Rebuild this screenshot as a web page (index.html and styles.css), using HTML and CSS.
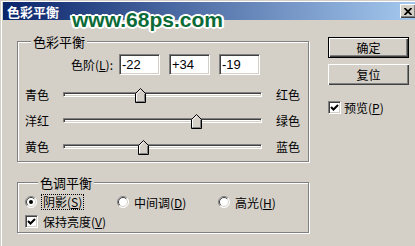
FILE: index.html
```html
<!DOCTYPE html>
<html lang="zh-CN">
<head>
    <meta charset="UTF-8">
    <title>色彩平衡</title>
    <link rel="stylesheet" href="styles.css">
</head>
<body>
    <div class="window">
        <div class="titlebar">
            <span class="title">色彩平衡</span>
            <span class="close-btn">
                <svg width="8" height="7" viewBox="0 0 8 7"><path d="M0.5 0 L7.5 7 M7.5 0 L0.5 7" stroke="#000" stroke-width="1.8"/></svg>
            </span>
        </div>
        <div class="content">
            <div class="main-col">
                <fieldset class="group group-color">
                    <legend>色彩平衡</legend>
                    <div class="level-row">
                        <label class="level-label">色阶(<u>L</u>):</label>
                        <input class="level-input" type="text" value="-22">
                        <input class="level-input" type="text" value="+34">
                        <input class="level-input" type="text" value="-19">
                    </div>
                    <div class="sliders">
                        <div class="slider-row">
                            <span class="slider-left">青色</span>
                            <div class="track">
                                <span class="thumb" style="left: 72px"><svg width="11" height="15" viewBox="0 0 11 15"><polygon points="0.5,14.5 0.5,5.5 5.5,0.5 10.5,5.5 10.5,14.5" fill="#d4d0c8" stroke="#000"/><path d="M1.5 13.5 V5.9 L5.5 1.9" stroke="#fff" fill="none"/><path d="M1.5 13.5 H9.5 V5.9" stroke="#808080" fill="none"/></svg></span>
                            </div>
                            <span class="slider-right">红色</span>
                        </div>
                        <div class="slider-row">
                            <span class="slider-left">洋红</span>
                            <div class="track">
                                <span class="thumb" style="left: 128px"><svg width="11" height="15" viewBox="0 0 11 15"><polygon points="0.5,14.5 0.5,5.5 5.5,0.5 10.5,5.5 10.5,14.5" fill="#d4d0c8" stroke="#000"/><path d="M1.5 13.5 V5.9 L5.5 1.9" stroke="#fff" fill="none"/><path d="M1.5 13.5 H9.5 V5.9" stroke="#808080" fill="none"/></svg></span>
                            </div>
                            <span class="slider-right">绿色</span>
                        </div>
                        <div class="slider-row">
                            <span class="slider-left">黄色</span>
                            <div class="track">
                                <span class="thumb" style="left: 75px"><svg width="11" height="15" viewBox="0 0 11 15"><polygon points="0.5,14.5 0.5,5.5 5.5,0.5 10.5,5.5 10.5,14.5" fill="#d4d0c8" stroke="#000"/><path d="M1.5 13.5 V5.9 L5.5 1.9" stroke="#fff" fill="none"/><path d="M1.5 13.5 H9.5 V5.9" stroke="#808080" fill="none"/></svg></span>
                            </div>
                            <span class="slider-right">蓝色</span>
                        </div>
                    </div>
                </fieldset>

                <fieldset class="group group-tone">
                    <legend>色调平衡</legend>
                    <div class="radio-row">
                        <label class="radio-item item-shadow">
                            <svg class="radio" width="12" height="12" viewBox="0 0 12 12"><circle cx="6" cy="6" r="5.5" fill="#fff"/><path d="M2.1 9.9 A5.5 5.5 0 0 1 9.9 2.1" stroke="#808080" fill="none"/><path d="M9.9 2.1 A5.5 5.5 0 0 1 2.1 9.9" stroke="#fff" fill="none"/><path d="M2.8 9.2 A4.5 4.5 0 0 1 9.2 2.8" stroke="#404040" fill="none"/><path d="M9.2 2.8 A4.5 4.5 0 0 1 2.8 9.2" stroke="#d4d0c8" fill="none"/><circle cx="6" cy="6" r="2" fill="#000"/></svg>
                            <span class="focus">阴影(<u>S</u>)</span>
                        </label>
                        <label class="radio-item item-mid">
                            <svg class="radio" width="12" height="12" viewBox="0 0 12 12"><circle cx="6" cy="6" r="5.5" fill="#fff"/><path d="M2.1 9.9 A5.5 5.5 0 0 1 9.9 2.1" stroke="#808080" fill="none"/><path d="M9.9 2.1 A5.5 5.5 0 0 1 2.1 9.9" stroke="#fff" fill="none"/><path d="M2.8 9.2 A4.5 4.5 0 0 1 9.2 2.8" stroke="#404040" fill="none"/><path d="M9.2 2.8 A4.5 4.5 0 0 1 2.8 9.2" stroke="#d4d0c8" fill="none"/></svg>
                            <span>中间调(<u>D</u>)</span>
                        </label>
                        <label class="radio-item">
                            <svg class="radio" width="12" height="12" viewBox="0 0 12 12"><circle cx="6" cy="6" r="5.5" fill="#fff"/><path d="M2.1 9.9 A5.5 5.5 0 0 1 9.9 2.1" stroke="#808080" fill="none"/><path d="M9.9 2.1 A5.5 5.5 0 0 1 2.1 9.9" stroke="#fff" fill="none"/><path d="M2.8 9.2 A4.5 4.5 0 0 1 9.2 2.8" stroke="#404040" fill="none"/><path d="M9.2 2.8 A4.5 4.5 0 0 1 2.8 9.2" stroke="#d4d0c8" fill="none"/></svg>
                            <span>高光(<u>H</u>)</span>
                        </label>
                    </div>
                    <label class="check-item keep-light">
                        <span class="checkbox"><svg width="9" height="9" viewBox="0 0 9 9"><polyline points="1,4 3.5,6.5 8,2" stroke="#000" stroke-width="2" fill="none"/></svg></span>
                        <span>保持亮度(<u>V</u>)</span>
                    </label>
                </fieldset>
            </div>

            <div class="side-col">
                <button class="btn btn-default">确定</button>
                <button class="btn">复位</button>
                <label class="check-item preview">
                    <span class="checkbox"><svg width="9" height="9" viewBox="0 0 9 9"><polyline points="1,4 3.5,6.5 8,2" stroke="#000" stroke-width="2" fill="none"/></svg></span>
                    <span>预览(<u>P</u>)</span>
                </label>
            </div>
        </div>
        <div class="watermark">www.68ps.com</div>
    </div>
</body>
</html>
```

FILE: styles.css
```css
* {
    box-sizing: border-box;
}
body {
    margin: 0;
    width: 415px;
    height: 246px;
    overflow: hidden;
    background: #d4d0c8;
    color: #000;
    font-family: "Noto Sans CJK SC", sans-serif;
    font-size: 12px;
}
.window {
    position: relative;
    width: 419px;
    height: 246px;
    padding: 2px 0 0 3px;
    box-shadow: inset 1px 1px #d4d0c8, inset 2px 2px #fff;
}
.titlebar {
    height: 18px;
    display: flex;
    align-items: center;
    justify-content: space-between;
    padding: 0 3px 0 4px;
    background: linear-gradient(to right, #0a246a, #a6caf0);
}
.title {
    color: #fff;
    font-weight: bold;
    font-size: 13px;
    line-height: 13px;
}
.close-btn {
    width: 16px;
    height: 14px;
    display: flex;
    align-items: center;
    justify-content: center;
    background: #d4d0c8;
    box-shadow: inset 1px 1px #fff, inset -1px -1px #404040, inset -2px -2px #808080;
}
.content {
    display: flex;
    padding: 15px 0 0 14px;
}
.main-col {
    width: 292px;
}
.side-col {
    width: 81px;
    margin-left: 19px;
    padding-top: 2px;
    display: flex;
    flex-direction: column;
}

/* group boxes */
.group {
    margin: 0;
    padding: 0;
    min-width: 0;
    border: 1px solid #808080;
    box-shadow: inset 1px 1px #fff, 1px 1px #fff;
}
.group legend {
    margin-left: 13px;
    padding: 0 2px;
    font-size: 13px;
    line-height: 13px;
    background: #d4d0c8;
}
.group-color {
    padding-bottom: 2px;
}
.group-tone {
    margin-top: 14px;
    padding: 5px 0 3px 7px;
}

/* level inputs */
.level-row {
    display: flex;
    align-items: center;
    padding-top: 6px;
}
.level-label {
    width: 95px;
    margin-right: 6px;
    text-align: right;
}
.level-input {
    width: 41px;
    height: 21px;
    margin: 0 9px 0 0;
    padding: 0 0 0 2px;
    background: #fff;
    border: 1px solid;
    border-color: #808080 #fff #fff #808080;
    box-shadow: inset 1px 1px #404040, inset -1px -1px #d4d0c8;
    font-family: "Liberation Sans", Arial, sans-serif;
    font-size: 13px;
    color: #000;
    outline: none;
}

/* sliders */
.sliders {
    margin-top: 6px;
    padding-left: 7px;
}
.slider-row {
    height: 26px;
    display: flex;
    align-items: center;
}
.slider-left {
    width: 38px;
}
.slider-right {
    margin-left: 14px;
}
.track {
    position: relative;
    width: 199px;
    height: 5px;
    background: #fff;
    border: 1px solid;
    border-color: #808080 #fff #fff #808080;
    box-shadow: inset 1px 1px #404040, inset -1px -1px #d4d0c8;
}
.thumb {
    position: absolute;
    top: -5px;
    width: 11px;
    height: 15px;
    margin-left: -1px;
}
.thumb svg {
    display: block;
}

/* radios and checkboxes */
.radio-row {
    height: 16px;
    display: flex;
    align-items: center;
}
.radio-item {
    display: flex;
    align-items: center;
}
.item-shadow {
    width: 92px;
}
.item-mid {
    width: 101px;
}
.radio {
    margin-right: 5px;
    flex: none;
}
.focus {
    padding: 0 1px;
    outline: 1px dotted #000;
    line-height: 14px;
}
.check-item {
    display: flex;
    align-items: center;
    gap: 5px;
}
.keep-light {
    height: 16px;
    margin-top: 3px;
}
.checkbox {
    width: 13px;
    height: 13px;
    display: flex;
    align-items: center;
    justify-content: center;
    background: #fff;
    border: 1px solid;
    border-color: #808080 #fff #fff #808080;
    box-shadow: inset 1px 1px #404040, inset -1px -1px #d4d0c8;
}
.checkbox svg {
    display: block;
}

/* buttons */
.btn {
    width: 81px;
    height: 21px;
    padding: 0;
    border: none;
    background: #d4d0c8;
    box-shadow: inset 1px 1px #fff, inset -1px -1px #404040, inset -2px -2px #808080;
    font-family: "Noto Sans CJK SC", sans-serif;
    font-size: 12px;
    color: #000;
}
.btn + .btn {
    margin-top: 6px;
}
.btn-default {
    border: 1px solid #000;
}
.preview {
    margin-top: 14px;
    gap: 3px;
}

.watermark {
    position: absolute;
    left: 72px;
    top: 9px;
    font-family: "Liberation Sans", Arial, sans-serif;
    font-weight: bold;
    font-size: 21px;
    line-height: 21px;
    color: #0b6b38;
    text-shadow: 2px 0 #fff, -2px 0 #fff, 0 2px #fff, 0 -2px #fff,
        1px 1px #fff, -1px -1px #fff, 1px -1px #fff, -1px 1px #fff,
        2px 1px #fff, -2px 1px #fff, 2px -1px #fff, -2px -1px #fff;
}
```
